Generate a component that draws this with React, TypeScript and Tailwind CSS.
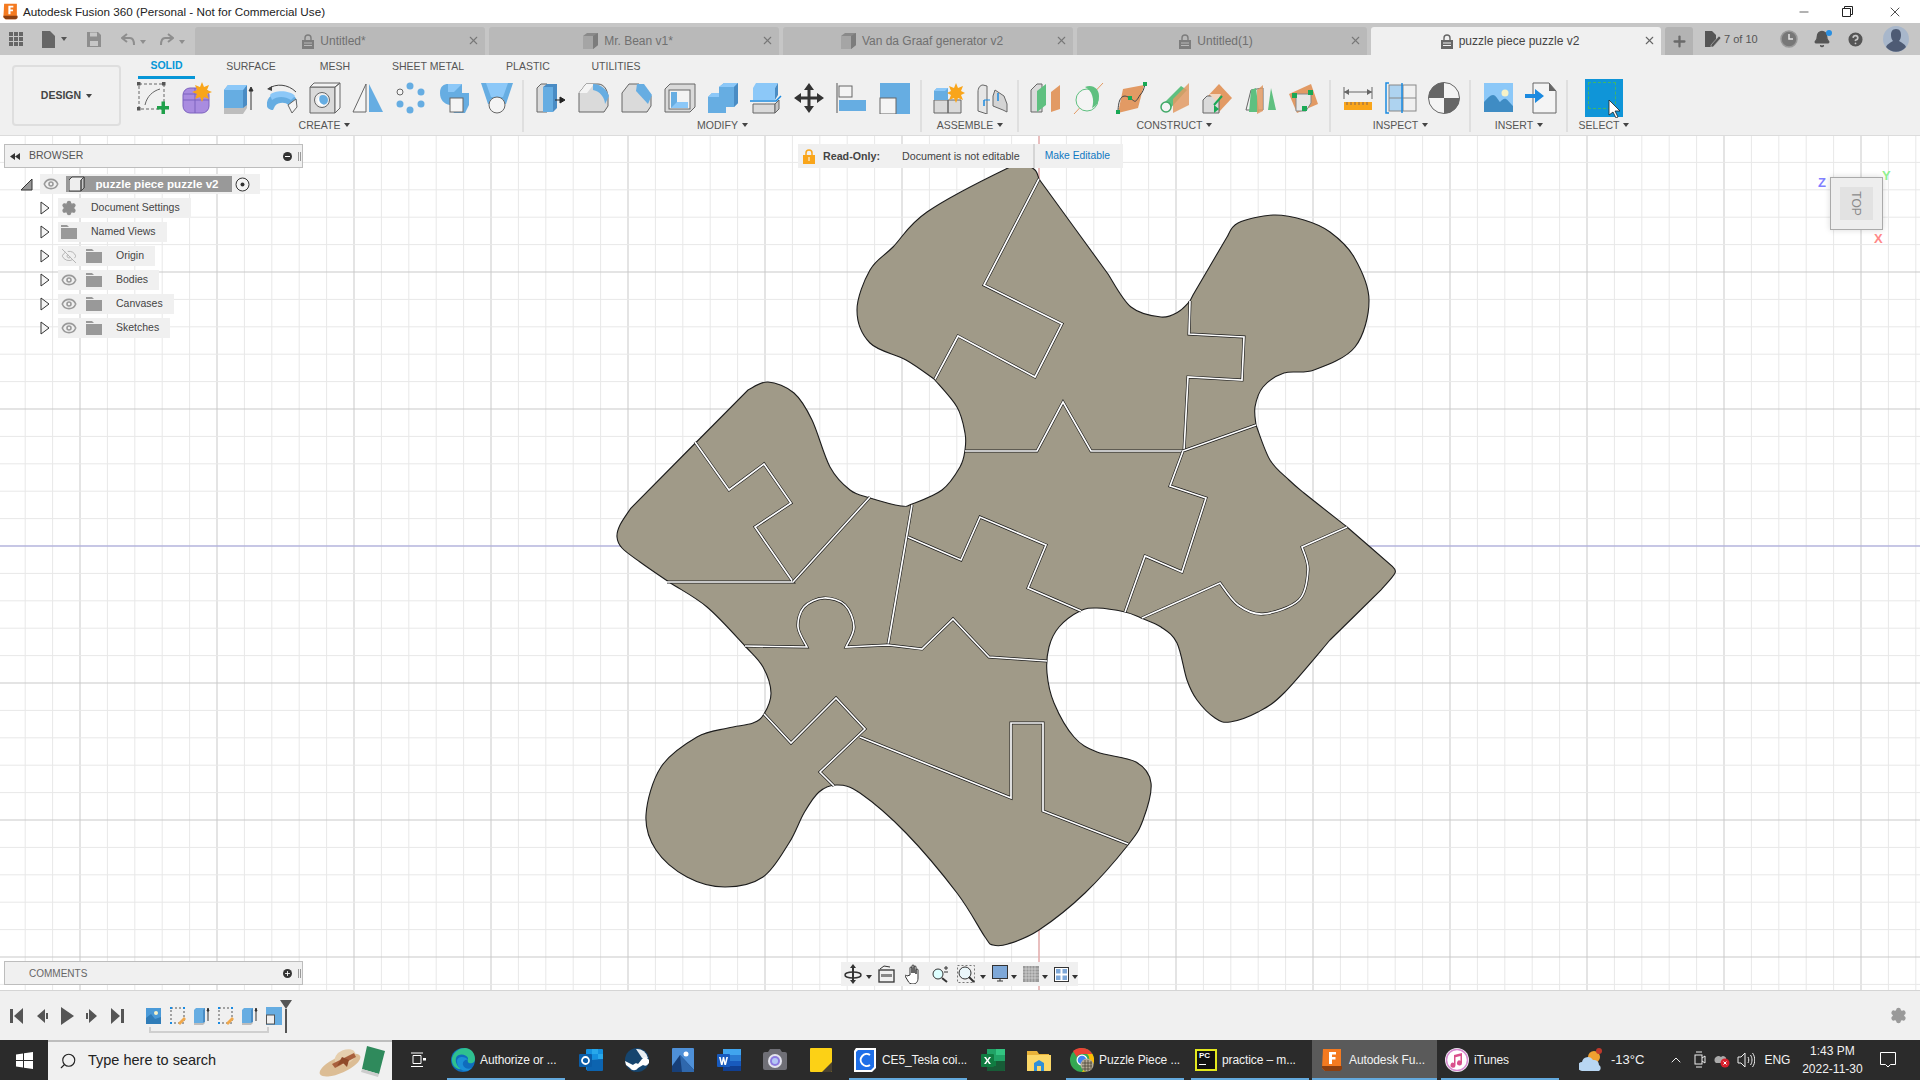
import type { ReactNode } from "react";
import { X, Minus, Plus, ChevronUp, Search, Eye, EyeOff, Settings, HelpCircle, Bell } from "lucide-react";

type Pt = [number, number];

// Catmull-Rom through a run of points; a two point run stays a straight line
function runToPath(run: Pt[]) {
    let d = "";
    for (let i = 0; i < run.length - 1; i++) {
        const p0 = run[Math.max(i - 1, 0)];
        const p1 = run[i];
        const p2 = run[i + 1];
        const p3 = run[Math.min(i + 2, run.length - 1)];
        const c1 = [p1[0] + (p2[0] - p0[0]) / 6, p1[1] + (p2[1] - p0[1]) / 6];
        const c2 = [p2[0] - (p3[0] - p1[0]) / 6, p2[1] - (p3[1] - p1[1]) / 6];
        d += ` C${c1[0]} ${c1[1]} ${c2[0]} ${c2[1]} ${p2[0]} ${p2[1]}`;
    }
    return d;
}

function runsToPath(runs: Pt[][], close = false) {
    let d = `M${runs[0][0][0]} ${runs[0][0][1]}`;
    runs.forEach((r) => {
        d += ` L${r[0][0]} ${r[0][1]}` + runToPath(r);
    });
    return close ? d + " Z" : d;
}

const outline: Pt[][] = [
    [[934, 379], [906, 360], [870, 343], [857, 310], [870, 270], [893, 247], [927, 212], [1008, 168], [1024, 165], [1035, 170], [1039, 179]],
    [[1039, 179], [1108, 274]],
    [[1108, 274], [1131, 307], [1161, 317], [1178, 312], [1190, 301]],
    [[1193, 295], [1227, 237]],
    [[1227, 237], [1238, 223], [1273, 215], [1304, 220], [1330, 232], [1354, 257], [1369, 300], [1355, 347], [1314, 370], [1284, 373], [1263, 387], [1255, 407], [1256, 425]],
    [[1256, 425], [1270, 460], [1289, 480], [1304, 493], [1347, 527]],
    [[1347, 527], [1392, 566]],
    [[1392, 566], [1395, 573], [1381, 590]],
    [[1381, 590], [1330, 640]],
    [[1330, 640], [1284, 693], [1258, 712], [1230, 722], [1215, 718], [1197, 700], [1187, 680], [1177, 643], [1161, 627], [1141, 618], [1125, 612], [1097, 608], [1080, 611], [1059, 627], [1049, 647], [1047, 673], [1054, 703], [1074, 737], [1097, 752], [1136, 762], [1151, 783], [1143, 820], [1128, 845], [1085, 893], [1039, 930], [1008, 944], [993, 945], [985, 937], [957, 893], [906, 833], [860, 793], [837, 785], [819, 792], [804, 813], [789, 843], [763, 877], [725, 887], [687, 877], [656, 850], [646, 815], [661, 767], [697, 737], [728, 728], [753, 723], [764, 714], [771, 693], [763, 667], [745, 646], [707, 607], [669, 582], [640, 562], [622, 548], [617, 537], [620, 525], [631, 508]],
    [[631, 508], [748, 390]],
    [[748, 390], [768, 382], [794, 393], [812, 420], [830, 467], [850, 490], [870, 498], [901, 506], [912, 504], [942, 490], [960, 467], [965, 450], [965, 433], [957, 407], [934, 379]],
];

const seams: Pt[][][] = [
    [[[1039, 179], [984, 285]], [[984, 285], [1062, 324]], [[1062, 324], [1035, 377]], [[1035, 377], [958, 336]], [[958, 336], [935, 379]]],
    [[[1190, 301], [1189, 334]], [[1189, 334], [1244, 337]], [[1244, 337], [1242, 380]], [[1242, 380], [1188, 377]], [[1188, 377], [1184, 451]]],
    [[[965, 451], [1037, 451]], [[1037, 451], [1063, 402]], [[1063, 402], [1091, 451]], [[1091, 451], [1183, 451]], [[1183, 451], [1256, 425]]],
    [[[1183, 451], [1170, 486]], [[1170, 486], [1206, 498]], [[1206, 498], [1182, 572]], [[1182, 572], [1145, 556]], [[1145, 556], [1125, 612]]],
    [[[1347, 527], [1302, 547]], [[1302, 547], [1308, 570], [1299, 600], [1263, 614], [1238, 605], [1220, 583]], [[1220, 583], [1142, 618]]],
    [[[695, 442], [729, 490]], [[729, 490], [764, 464]], [[764, 464], [791, 503]], [[791, 503], [755, 527]], [[755, 527], [793, 582]], [[793, 582], [667, 582]]],
    [[[870, 497], [793, 582]]],
    [[[912, 505], [888, 645]]],
    [[[908, 537], [961, 560]], [[961, 560], [980, 517]], [[980, 517], [1046, 545]], [[1046, 545], [1028, 588]], [[1028, 588], [1081, 611]]],
    [[[745, 646], [807, 647]], [[807, 647], [798, 627], [804, 607], [824, 598], [845, 605], [854, 627], [846, 647]], [[846, 647], [888, 645]], [[888, 645], [922, 649]], [[922, 649], [953, 619]], [[953, 619], [989, 657]], [[989, 657], [1047, 661]]],
    [[[764, 714], [791, 743]], [[791, 743], [836, 698]], [[836, 698], [865, 729]], [[865, 729], [820, 772]], [[820, 772], [834, 786]]],
    [[[860, 737], [1011, 798]], [[1011, 798], [1011, 723]], [[1011, 723], [1043, 723]], [[1043, 723], [1043, 811]], [[1043, 811], [1128, 844]]],
];

const STEP = 137;
const MINOR = STEP / 5;

function CanvasDrawing() {
    const vLines: { x: number; major: boolean }[] = [];
    for (let i = -38; i < 35; i++) vLines.push({ x: 1039 + i * MINOR, major: i % 5 === 0 });
    const hLines: { y: number; major: boolean }[] = [];
    for (let i = -15; i < 17; i++) hLines.push({ y: 546 + i * MINOR, major: i % 5 === 0 });
    return (
        <svg className="absolute inset-0 w-full h-full" viewBox="0 136 1920 854">
            {vLines.map((l) => (
                <line key={`v${l.x}`} x1={l.x} x2={l.x} y1={136} y2={990} stroke={l.major ? "#c9c9c9" : "#e8e8e8"} strokeWidth={1} />
            ))}
            {hLines.map((l) => (
                <line key={`h${l.y}`} y1={l.y} y2={l.y} x1={0} x2={1920} stroke={l.major ? "#c9c9c9" : "#e8e8e8"} strokeWidth={1} />
            ))}
            <line x1={0} x2={1920} y1={546} y2={546} stroke="#a9a9e6" />
            <line x1={1039} x2={1039} y1={136} y2={990} stroke="#ee9a9a" />
            <path d={runsToPath(outline, true)} fill="#a09a88" stroke="#1c1c1c" strokeWidth={1.1} />
            {seams.map((s, i) => (
                <g key={i} fill="none">
                    <path d={runsToPath(s)} stroke="#1c1c1c" strokeWidth={3} />
                    <path d={runsToPath(s)} stroke="#fff" strokeWidth={1.7} />
                </g>
            ))}
        </svg>
    );
}

const Ic = ({ children, w = 32, h = 32 }: { children: ReactNode; w?: number; h?: number }) => (
    <svg width={w} height={h} viewBox="0 0 32 32">{children}</svg>
);

const Caret = ({ c = "#444" }: { c?: string }) => (
    <span className="inline-block w-0 h-0 border-l-[3px] border-r-[3px] border-t-[4px] border-l-transparent border-r-transparent" style={{ borderTopColor: c }} />
);

const BL = "#66ade2";
const BD = "#4a8cc4";
const BH = "#8cc8f8";
const G = "#dadada";
const O = "#666";

const toolIcons: Record<string, ReactNode> = {
    sketch: (
        <Ic>
            <rect x="2" y="2" width="25" height="25" fill="none" stroke="#666" strokeWidth="1" strokeDasharray="3 2" />
            {[[0, 0], [25, 0], [0, 25]].map(([x, y]) => <rect key={`${x}${y}`} x={x} y={y} width="3.5" height="3.5" fill="#555" />)}
            <path d="M8 23 C10 14 16 9 23 7" fill="none" stroke="#666" />
            <path d="M20 24h4.500v-4.500h3.500v4.500h4v3.500h-4v4.500h-3.500v-4.500h-4.500z" fill="#1fa04a" />
        </Ic>
    ),
    form: (
        <Ic>
            <rect x="3" y="6" width="26" height="25" rx="7" fill="#a98ce0" stroke="#7d62bf" />
            <path d="M3 18h26M15 6v25M3 12h20" stroke="#7d62bf" fill="none" />
            <path d="M22 0l2 5 5-2-2 5 5 2-5 2 2 5-5-2-2 5-2-5-5 2 2-5-5-2 5-2-2-5 5 2z" fill="#f9a51a" />
        </Ic>
    ),
    extrude: (
        <Ic>
            <path d="M1 8l4-5h19v21l-4 5H1z" fill={BL} />
            <path d="M20 8l4-5v21l-4 5z" fill={BD} />
            <path d="M1 8l4-5h19l-4 5z" fill={BH} />
            <path d="M1 26h19l4-3v3l-4 6H1z" fill="#bdbdbd" />
            <path d="M28 28V6M26 9l2-4 2 4z" stroke="#333" fill="#333" />
        </Ic>
    ),
    revolve: (
        <Ic>
            <path d="M1 24C0 14 8 11 16 11s15 3 15 9l-4 9-5-6c-2-3-10-3-13 1l-2 4c-3 0-6-2-6-4z" fill={BL} />
            <path d="M4 13C8 8 24 8 29 14l-4 4C19 14 11 14 6 18z" fill={BH} />
            <path d="M22 23l8-6 1 8-5 6z" fill="#f4f4f4" stroke="#666" />
            <path d="M2 7C10 1 22 2 30 10" fill="none" stroke="#444" />
            <path d="M1 7l5-3v5z" fill="#444" />
        </Ic>
    ),
    hole: (
        <Ic>
            <path d="M1 5h25v26H1z" fill={G} stroke={O} />
            <path d="M1 5l4-4h26l-5 4zM26 5l5-4v25l-5 5z" fill="#f3f3f3" stroke={O} />
            <circle cx="13" cy="18" r="7.500" fill="#efefef" stroke={O} />
            <circle cx="14" cy="18" r="5" fill={BL} />
            <path d="M11 14a6 6 0 0 0 5 9a5 5 0 0 1-5-9z" fill="#fff" />
        </Ic>
    ),
    mirror: (
        <Ic>
            <path d="M14 2v28H1z" fill="#f4f4f4" stroke={O} />
            <path d="M17 2v28h14z" fill={BL} />
        </Ic>
    ),
    pattern: (
        <Ic>
            <circle cx="5" cy="10" r="3" fill="#f4f4f4" stroke={O} />
            <circle cx="15" cy="4" r="3.500" fill={BL} />
            <circle cx="26" cy="10" r="3.500" fill={BL} />
            <circle cx="5" cy="22" r="3.500" fill={BL} />
            <circle cx="26" cy="22" r="3.500" fill={BL} />
            <circle cx="15" cy="28" r="3.500" fill={BL} />
        </Ic>
    ),
    combine: (
        <Ic>
            <path d="M2 11C2 4 6 2 10 2h14v9h7v12l-4 8H16l-4-8C6 22 2 18 2 11z" fill={BL} />
            <path d="M10 2h14l-8 8h-6z" fill={BH} />
            <rect x="12" y="16" width="13" height="14" fill="#f4f4f4" stroke={O} />
        </Ic>
    ),
    loft: (
        <Ic>
            <path d="M0 1h32l-7 21H7z" fill={BL} />
            <path d="M5 1h22l-5 14H10z" fill={BH} />
            <circle cx="16" cy="23" r="8" fill="#f4f4f4" stroke={O} />
        </Ic>
    ),
    press: (
        <Ic>
            <path d="M2 30V6l4-4h6v28z" fill={G} stroke={O} />
            <path d="M8 5l4-3h10l-4 3zM18 5l4-3v24l-4 4z" fill={BD} />
            <rect x="8" y="5" width="10" height="25" fill={BL} />
            <path d="M20 18h7M25 15l5 3-5 3z" stroke="#222" fill="#222" />
        </Ic>
    ),
    fillet: (
        <Ic>
            <path d="M1 30V11L8 2h12c6 0 10 6 10 14v8l-4 6z" fill={G} stroke={O} />
            <path d="M1 11L8 2h8l-7 9z" fill="#f4f4f4" />
            <path d="M15 2c8 0 14 6 16 12l-4 8c0-6-5-13-12-14z" fill={BL} />
        </Ic>
    ),
    chamfer: (
        <Ic>
            <path d="M1 30V11L8 2h10l12 12v10l-4 6z" fill={G} stroke={O} />
            <path d="M16 2h7l8 11-4 9-12-13z" fill={BL} />
        </Ic>
    ),
    shell: (
        <Ic>
            <path d="M1 30V7l5-5h25v23l-5 5z" fill={G} stroke={O} />
            <rect x="5" y="8" width="21" height="19" fill="#f3f3f3" stroke={O} />
            <path d="M7 10h6v10h11v6H7z" fill={BL} />
            <path d="M13 20h11v6H7z" fill={BH} />
        </Ic>
    ),
    combine2: (
        <Ic>
            <path d="M1 15l4-4h7V5l5-4h14v20l-4 4h-8v6H1z" fill={BL} />
            <path d="M12 5l5-4h14l-4 4zM1 15l4-4h7v4z" fill={BH} />
            <path d="M27 5l4-4v20l-4 4z" fill={BD} />
        </Ic>
    ),
    offset: (
        <Ic>
            <path d="M3 6l3-5h22l-3 5zM3 6h22v12H3z" fill={BH} />
            <path d="M25 6l3-5v12l-3 5z" fill={BD} />
            <path d="M0 19h26l5-5" stroke="#1b8ae0" fill="none" strokeWidth="1.500" />
            <path d="M3 22h22v9H3z" fill={G} stroke={O} />
            <path d="M25 22l4-4v9l-4 4z" fill="#c6c6c6" stroke={O} />
        </Ic>
    ),
    move: (
        <Ic>
            <path d="M16 1l5 7h-3.500v6.500H24V11l7 5-7 5v-3.500h-6.500V24H21l-5 7-5-7h3.500v-6.500H8V21l-7-5 7-5v3.500h6.500V8H11z" fill="#333" />
        </Ic>
    ),
    align: (
        <Ic>
            <path d="M1 1v30" stroke="#555" />
            <rect x="3" y="4" width="13" height="11" fill="#f4f4f4" stroke={O} />
            <rect x="3" y="18" width="27" height="11" fill={BL} />
        </Ic>
    ),
    scale: (
        <Ic>
            <path d="M1 1h30v31H1z" fill={BL} />
            <rect x="1" y="16" width="16" height="16" fill="#f4f4f4" stroke={O} />
        </Ic>
    ),
    newcomp: (
        <Ic>
            <path d="M1 18h14v13H1zM15 18h13v13H15z" fill={G} stroke={O} />
            <path d="M1 9l3-3h11v12H1z" fill={BL} />
            <path d="M1 9l3-3h11l-3 3z" fill={BH} />
            <path d="M23 1l2 5 5-2-2 5 4 2-4 2 2 5-5-2-2 5-2-5-5 2 2-5-4-2 4-2-2-5 5 2z" fill="#f9a51a" />
        </Ic>
    ),
    joint: (
        <Ic>
            <path d="M2 29V10c0-4 2-7 5-7l4 1v28z" fill="#e6e6e6" stroke={O} />
            <path d="M17 14l2-6 9 6 3 8v8l-4-2-10-4z" fill="#d4d4d4" stroke={O} />
            <path d="M8 18v6M22 11v8" stroke="#1b8ae0" strokeWidth="1.500" />
            <path d="M8 18h6" stroke="#1b8ae0" />
        </Ic>
    ),
    plane1: (
        <Ic>
            <path d="M1 30V8l6-6h5v28z" fill={G} stroke={O} />
            <path d="M7 30V9l9-7v21z" fill="#5fc080" />
            <path d="M21 10l9-7v24l-9 3z" fill="#e29a64" />
        </Ic>
    ),
    plane2: (
        <Ic>
            <path d="M1 32L30 1" stroke="#e29a64" />
            <ellipse cx="14" cy="18" rx="11" ry="11" fill="#f4f4f4" stroke="#5fc080" />
            <path d="M12 5c8-3 14 2 14 9s-3 10-7 12c3-8 0-18-7-21z" fill="#5fc080" />
        </Ic>
    ),
    plane3: (
        <Ic>
            <path d="M2 31l5-24L28 3l-6 23z" fill="#e29a64" />
            <path d="M2 31c0-10 2-20 10-16s6 8 12-2c3-3 4-6 5-11" fill="none" stroke="#444" />
            <rect x="0" y="28" width="4" height="4" fill="#19a855" />
            <rect x="27" y="0" width="4" height="4" fill="#19a855" />
            <rect x="12" y="14" width="4" height="4" fill="#19a855" />
        </Ic>
    ),
    plane4: (
        <Ic>
            <path d="M2 24L22 4l6 4L8 30z" fill="#5fc080" />
            <circle cx="7" cy="25" r="5" fill="#f4f4f4" stroke="#3fa866" strokeWidth="1.500" />
            <path d="M14 17L30 1v22L14 31z" fill="#e29a64" opacity=".85" />
        </Ic>
    ),
    plane5: (
        <Ic>
            <path d="M4 16L17 2l13 14-13 14z" fill="#e29a64" />
            <path d="M1 18l4-4h12v17H1z" fill={G} stroke={O} />
            <path d="M7 12h12l-4 8z" fill="#f2d6c0" />
            <path d="M12 23l8-9" stroke="#19a855" strokeWidth="2" />
            <path d="M12 23v8l5-4z" fill="#19a855" />
        </Ic>
    ),
    plane6: (
        <Ic>
            <path d="M1 28L6 8l12-2v22z" fill="#f1f1f1" stroke="#666" />
            <path d="M6 8l5-2 3 24H4z" fill="#5fc080" />
            <path d="M26 6l5 22h-8z" fill="#5fc080" />
            <path d="M12 8l6-5v26l-6 3z" fill="#e29a64" opacity=".85" />
        </Ic>
    ),
    plane7: (
        <Ic>
            <path d="M1 12L23 2l7 20-21 9z" fill="#e29a64" />
            <path d="M8 12h15v9l-5 8H8z" fill="#e6e6e6" stroke="#888" />
            <rect x="4" y="11" width="5" height="5" fill="#19a855" />
            <rect x="20" y="8" width="5" height="5" fill="#19a855" />
            <rect x="14" y="24" width="5" height="5" fill="#19a855" />
        </Ic>
    ),
    measure: (
        <Ic>
            <path d="M2 5v12M30 5v12M2 10h28" stroke="#666" fill="none" />
            <path d="M2 10l5-3v6zM30 10l-5-3v6z" fill="#666" />
            <rect x="2" y="20" width="28" height="8" fill="#f9a51a" />
            <path d="M5 20v3M9 20v3M13 20v3M17 20v3M21 20v3M25 20v3" stroke="#865" />
        </Ic>
    ),
    section: (
        <Ic>
            <rect x="4" y="3" width="14" height="26" fill="#aed3f0" />
            <rect x="4" y="3" width="27" height="26" fill="none" stroke="#888" />
            <path d="M4 16h27M18 3v26" stroke="#888" fill="none" />
            <path d="M4 1H1v30h3M17 1v30" stroke="#1b8ae0" fill="none" strokeWidth="1.500" />
        </Ic>
    ),
    center: (
        <Ic>
            <circle cx="16" cy="16" r="15.500" fill="#f4f4f4" stroke="#666" />
            <path d="M16 .5A15.500 15.500 0 0 0 .5 16H16zM16 16h15.500A15.500 15.500 0 0 1 16 31.500z" fill="#666" />
        </Ic>
    ),
    image: (
        <Ic>
            <rect x="2" y="1" width="29" height="29" fill="#8cc8f8" />
            <circle cx="23" cy="11" r="3.500" fill="#f7f2c8" />
            <path d="M2 30V20c4-4 6-7 9-7s5 5 7 7c2-2 4-4 6-3s5 5 7 7v6z" fill="#3f8cc4" />
        </Ic>
    ),
    insert: (
        <Ic>
            <path d="M8 1h16l7 8v22H8z" fill="#f4f4f4" stroke="#666" />
            <path d="M24 1l7 8h-7z" fill="#666" />
            <path d="M0 12h10V7l9 7-9 7v-5H0z" fill="#1b8ae0" />
        </Ic>
    ),
};

const Tool = ({ name }: { name: string }) => (
    <div className="w-[43px] h-[32px] flex items-center justify-center">{toolIcons[name]}</div>
);

function Group({ label, tools, children }: { label: string; tools?: string[]; children?: ReactNode }) {
    return (
        <div className="flex flex-col items-center">
            <div className="flex h-[36px] items-center">
                {tools?.map((t) => <Tool key={t} name={t} />)}
                {children}
            </div>
            <div className="mt-[1px] h-4 flex items-center gap-1 text-[10.5px] leading-none text-[#555]">
                {label} <Caret />
            </div>
        </div>
    );
}

const Sep = () => <div className="w-[2px] h-[52px] ml-[4px] mr-[5px] bg-[#dfdfdf]" />;

function DocTab({ title, kind, active }: { title: string; kind: "lock" | "cube"; active?: boolean }) {
    return (
        <div className={`w-[290px] h-[28px] rounded-t-[3px] relative flex items-center justify-center gap-[6px] pr-[12px] text-[12px] ${active ? "bg-[#f0f0f0] text-[#444]" : "bg-[#b9b9b9] text-[#707070]"}`}>
            {kind === "lock" ? (
                <svg width="12" height="15" viewBox="0 0 12 15"><path d="M3 6V4a3 3 0 0 1 6 0v2" fill="none" stroke={active ? "#666" : "#7d7d7d"} strokeWidth="1.400" /><path d="M0 6h12v9H0z" fill={active ? "#666" : "#7d7d7d"} /><path d="M2 9h8M2 11.500h8" stroke={active ? "#f0f0f0" : "#b9b9b9"} /></svg>
            ) : (
                <svg width="15" height="16" viewBox="0 0 15 16"><path d="M0 3l4-3h11v12l-5 4H0z" fill="#8a8a8a" /><path d="M0 3h10v13H0z" fill="#a5a5a5" /><path d="M10 3l5-3v12l-5 4z" fill="#7c7c7c" /></svg>
            )}
            <span>{title}</span>
            <X className="absolute right-[5px] top-[7px]" size={13} color={active ? "#666" : "#777"} strokeWidth={2} />
        </div>
    );
}

function TreeRow({ label, eye, folder = true, gear }: { label: string; eye?: "on" | "off"; folder?: boolean; gear?: boolean }) {
    return (
        <div className="h-[24px] flex items-center">
            <svg width="10" height="14" viewBox="0 0 10 14" className="ml-[40px] mr-[8px]"><path d="M1 1l8 6-8 6z" fill="#f4f4f4" stroke="#333" /></svg>
            <div className="h-[20px] flex items-center bg-[#f0f0f0] pr-[11px] text-[10.5px] text-[#444]">
                {eye === "on" && <Eye className="ml-[3px] mr-[9px]" size={16} color="#9a9a9a" strokeWidth={2.4} />}
                {eye === "off" && <EyeOff className="ml-[3px] mr-[9px]" size={16} color="#b5b5b5" strokeWidth={1.5} />}
                {gear && <Settings className="ml-[3px] mr-[14px]" size={16} color="#8d8d8d" fill="#8d8d8d" />}
                {folder && !gear && (
                    <svg width="16" height="14" viewBox="0 0 16 14" className={`mr-[14px] ${eye ? "" : "ml-[3px]"}`}><path d="M0 0h6l2 2h8v12H0z" fill="#999" /><path d="M0 2.500h16" stroke="#f0f0f0" /></svg>
                )}
                <span>{label}</span>
            </div>
        </div>
    );
}

function PlayBtn({ d }: { d: string }) {
    return (
        <div className="w-[25px] flex justify-center">
            <svg width="16" height="18" viewBox="0 0 16 18"><path d={d} fill="#555" /></svg>
        </div>
    );
}

const TlIcon = ({ children }: { children: ReactNode }) => (
    <svg width="16" height="18" viewBox="0 0 16 18">{children}</svg>
);

function TlSketch() {
    return (
        <TlIcon>
            <rect x="1" y="1" width="13" height="15" fill="none" stroke="#555" strokeDasharray="2 2" />
            <path d="M0 0h2v2H0zM13 0h2v2h-2zM0 15h2v2H0z" fill="#1b8ae0" />
            <path d="M8 16l6-6 2 2-6 6z" fill="#f0a84c" />
        </TlIcon>
    );
}

function TlExtrude() {
    return (
        <TlIcon>
            <path d="M0 3l2-2h9v14l-2 1H0z" fill={BL} />
            <path d="M9 3l2-2v14l-2 1z" fill={BD} />
            <path d="M0 16h9l2-1v1l-2 2H0z" fill="#bdbdbd" />
            <path d="M14 14V3M13 4l1-3 1 3z" stroke="#333" />
        </TlIcon>
    );
}

const AppIcon = ({ children }: { children: ReactNode }) => (
    <svg width="24" height="24" viewBox="0 0 24 24">{children}</svg>
);

const FusionIcon = ({ size = 24 }: { size?: number }) => (
    <svg width={size} height={size} viewBox="0 0 24 24">
        <path d="M3 1h18v19l-2 3H5l-3-3z" fill="#f47a20" />
        <path d="M2 18h20v3l-2 2H5l-3-3z" fill="#8c3f10" />
        <path d="M9 4h7v2.500h-4v2.500h3.500v2.500H12V16H9z" fill="#fff" />
    </svg>
);

const appIcons: Record<string, ReactNode> = {
    edge: (
        <AppIcon>
            <circle cx="12" cy="12" r="12" fill="#0f6cbd" />
            <path d="M1 10C3 3 9 0 14 0c6 0 10 5 10 11 0 4-4 5-6 4s-1-4-1-5C15 6 7 5 5 10c-1 4 1 9 6 11C5 22 0 17 1 10z" fill="#2fc08f" />
            <path d="M6 13c0-5 9-5 11-1-3-1-6 2-5 5s5 5 9 3c-6 6-15 2-15-7z" fill="#1b8fd6" />
        </AppIcon>
    ),
    outlook: (
        <AppIcon>
            <rect x="7" y="1" width="17" height="21" rx="1" fill="#1490df" />
            <path d="M13 1h6v5h-6zM19 6h5v5h-5zM13 11h6v5h-6z" fill="#28a8ea" />
            <path d="M7 12l17-1v11a1 1 0 0 1-1 1H8z" fill="#0c64b0" />
            <rect x="0" y="6" width="13" height="13" rx="1" fill="#0a5da8" />
            <circle cx="6.500" cy="12.500" r="3.500" fill="none" stroke="#fff" strokeWidth="1.800" />
        </AppIcon>
    ),
    steam: (
        <AppIcon>
            <circle cx="12" cy="12" r="12" fill="#16456e" />
            <path d="M0 13l8 4c2-2 4-2 5-1l4-5a4 4 0 1 1 1 6l-5 3c-2 3-6 3-8 0L1 17z" fill="#fff" />
            <path d="M11 1a11 11 0 0 1 12 9h-6z" fill="#fff" opacity=".9" />
        </AppIcon>
    ),
    photos: (
        <AppIcon>
            <rect x="1" y="0" width="22" height="24" rx="1" fill="#4e90d8" />
            <circle cx="15" cy="6" r="2.500" fill="#fff" />
            <path d="M1 18L9 7l14 15v2H1z" fill="#173f78" />
            <path d="M9 7l14 15v2H11z" fill="#2f68ad" />
        </AppIcon>
    ),
    word: (
        <AppIcon>
            <rect x="6" y="1" width="18" height="22" rx="1" fill="#2b7cd3" />
            <path d="M6 1h18v6H6z" fill="#41a5ee" />
            <path d="M6 13h18v5H6z" fill="#185abd" />
            <path d="M6 18h18v5H6z" fill="#103f91" />
            <rect x="0" y="6" width="13" height="13" rx="1" fill="#185abd" />
            <path d="M2 9h1.700l1.100 5 1-5h1.400l1 5 1.100-5H11l-2 8H7.400l-.9-4.300-.9 4.300H4z" fill="#fff" />
        </AppIcon>
    ),
    camera: (
        <AppIcon>
            <rect x="0" y="4" width="24" height="18" rx="2" fill="#6f6f76" />
            <path d="M5 4l2-3h10l2 3z" fill="#6f6f76" />
            <circle cx="12" cy="13" r="7" fill="#e4e4ee" />
            <circle cx="12" cy="13" r="5" fill="#8d7be0" />
            <circle cx="12" cy="13" r="3" fill="#b4c7f4" />
        </AppIcon>
    ),
    sticky: (
        <AppIcon>
            <rect x="1" y="0" width="22" height="24" rx="1" fill="#fcd116" />
            <path d="M13 24l10-10v9a1 1 0 0 1-1 1z" fill="#4a4230" />
        </AppIcon>
    ),
    ce5: (
        <AppIcon>
            <path d="M3 0h20v20l-4 4H1V3z" fill="#fff" />
            <path d="M5 2h16v17l-3 3H3V4z" fill="#1e6fe8" />
            <path d="M17 7a6 6 0 1 0 0 10" fill="none" stroke="#fff" strokeWidth="2" />
        </AppIcon>
    ),
    excel: (
        <AppIcon>
            <rect x="6" y="1" width="18" height="22" rx="1" fill="#21a366" />
            <path d="M6 1h9v6H6z" fill="#21a366" />
            <path d="M15 1h9v6h-9z" fill="#33c481" />
            <path d="M6 13h9v5H6z" fill="#107c41" />
            <path d="M15 13h9v5h-9z" fill="#185c37" />
            <path d="M6 18h18v4a1 1 0 0 1-1 1H6z" fill="#185c37" />
            <rect x="0" y="6" width="13" height="13" rx="1" fill="#107c41" />
            <path d="M3 9h2l1.500 2.500L8 9h2l-2.500 3.500L10 16H8l-1.500-2.500L5 16H3l2.500-3.500z" fill="#fff" />
        </AppIcon>
    ),
    explorer: (
        <AppIcon>
            <path d="M0 3h10l2 3h10v16H0z" fill="#e8b23a" />
            <path d="M0 7h24v15a1 1 0 0 1-1 1H0z" fill="#fbd768" />
            <path d="M7 15l5-3 5 3v8h-3v-5h-4v5H7z" fill="#2f8fd8" />
        </AppIcon>
    ),
    chrome: (
        <AppIcon>
            <circle cx="12" cy="12" r="12" fill="#34a853" />
            <path d="M12 0a12 12 0 0 1 10.400 6H12a6 6 0 0 0-5.200 3L3 3a12 12 0 0 1 9-3z" fill="#ea4335" />
            <path d="M22.400 6A12 12 0 0 1 12 24l5.200-9a6 6 0 0 0 0-9z" fill="#fbbc05" />
            <circle cx="12" cy="12" r="5.500" fill="#fff" />
            <circle cx="12" cy="12" r="4.300" fill="#4285f4" />
            <circle cx="17" cy="17" r="6.500" fill="#b5ab97" />
            <path d="M12 15h10M12 18h10M12 21h8M15 12v11M18 12v11M21 13v9" stroke="#4a4436" strokeWidth=".8" />
        </AppIcon>
    ),
    pycharm: (
        <div className="w-[22px] h-[22px] bg-[#e3e81e] p-[2px]">
            <div className="w-full h-full bg-[#111] flex flex-col pl-[2px] text-[8px] font-bold leading-[10px] text-white">
                PC
                <div className="w-[7px] h-[1px] mt-[3px] bg-white" />
            </div>
        </div>
    ),
    itunes: (
        <AppIcon>
            <circle cx="12" cy="12" r="12" fill="#f4f4f8" />
            <circle cx="12" cy="12" r="10.500" fill="#fff" stroke="#d88bd0" strokeWidth="1.500" />
            <path d="M9 7l8-2v10a2.500 2.500 0 1 1-1.500-2.300V8l-5 1.200v8a2.500 2.500 0 1 1-1.500-2.300z" fill="#d9508c" />
        </AppIcon>
    ),
};

function TaskBtn({ icon, label, active }: { icon: ReactNode; label?: string; active?: boolean }) {
    if (!label) {
        return <div className="w-[46px] h-10 flex items-center justify-center">{icon}</div>;
    }
    return (
        <div className={`w-[125px] h-10 relative flex items-center gap-[5px] pl-[8px] text-[12px] whitespace-nowrap text-[#f2f2f2] ${active ? "bg-[#5a5a5a]" : ""}`}>
            {icon}
            <span className="tracking-[-0.1px]">{label}</span>
            <div className={`absolute bottom-0 h-[2px] bg-[#63a9dd] ${active ? "left-0 right-0" : "left-[4px] right-[3px]"}`} />
        </div>
    );
}

export default function App() {
    return (
        <div className="w-[1920px] h-[1080px] flex flex-col overflow-hidden bg-white font-['Liberation_Sans',sans-serif]">
            {/* title bar */}
            <div className="h-[23px] flex items-center bg-white text-[11.7px] text-[#222]">
                <div className="w-[23px] pl-[2px]"><FusionIcon size={17} /></div>
                <span>Autodesk Fusion 360 (Personal - Not for Commercial Use)</span>
                <div className="ml-auto flex items-center">
                    <Minus size={14} color="#222" strokeWidth={1.2} className="mr-[31px]" />
                    <svg width="11" height="11" viewBox="0 0 11 11" className="mr-[34px]"><path d="M.5 2.500h8v8h-8zM2.500 2.500v-2h8v8h-2" fill="none" stroke="#222" /></svg>
                    <X size={16} color="#222" strokeWidth={1.2} className="mr-[17px]" />
                </div>
            </div>

            {/* document tabs */}
            <div className="h-[32px] flex items-end bg-[#c6c6c6]">
                <div className="w-[195px] h-[32px] relative flex items-center pl-[9px]">
                    <svg width="14" height="14" viewBox="0 0 14 14" className="mr-[19px]"><path d="M0 0h4v4H0zM5 0h4v4H5zM10 0h4v4h-4zM0 5h4v4H0zM5 5h4v4H5zM10 5h4v4h-4zM0 10h4v4H0zM5 10h4v4H5zM10 10h4v4h-4z" fill="#666" /></svg>
                    <svg width="13" height="17" viewBox="0 0 13 17" className="mr-[6px]"><path d="M0 0h8l5 5v12H0z" fill="#666" /></svg>
                    <Caret c="#555" />
                    <svg width="14" height="15" viewBox="0 0 14 15" className="ml-[20px]"><path d="M0 0h11l3 3v12H0z" fill="#8e8e8e" /><rect x="3" y="0.500" width="7" height="4" fill="#c6c6c6" /><rect x="3" y="9" width="8" height="5" fill="#c6c6c6" /></svg>
                    <svg width="14" height="13" viewBox="0 0 14 13" className="ml-[20px]"><path d="M6 1L1 5l5 4M1 5h8c3 0 4 3 4 7" fill="none" stroke="#8e8e8e" strokeWidth="2" /></svg>
                    <span className="ml-[5px]"><Caret c="#8e8e8e" /></span>
                    <svg width="14" height="13" viewBox="0 0 14 13" className="ml-[14px]"><path d="M8 1l5 4-5 4M13 5H5c-3 0-4 3-4 7" fill="none" stroke="#8e8e8e" strokeWidth="2" /></svg>
                    <span className="ml-[5px]"><Caret c="#8e8e8e" /></span>
                </div>
                <div className="flex gap-[4px] items-end">
                    <DocTab title="Untitled*" kind="lock" />
                    <DocTab title="Mr. Bean v1*" kind="cube" />
                    <DocTab title="Van da Graaf generator v2" kind="cube" />
                    <DocTab title="Untitled(1)" kind="lock" />
                    <DocTab title="puzzle piece puzzle v2" kind="lock" active />
                </div>
                <div className="ml-[4px] w-[28px] h-[28px] rounded-t-[3px] bg-[#b3b3b3] flex items-center justify-center">
                    <Plus size={17} color="#6a6a6a" strokeWidth={3.200} />
                </div>
                <div className="h-[32px] flex items-center text-[11px] font-bold text-[#555]">
                    <svg width="16" height="16" viewBox="0 0 16 16" className="ml-[12px] mr-[3px]"><path d="M0 0h7l4 4v5l-5 7H0z" fill="#555" /><path d="M6 14l8-9 2 2-8 9H6z" fill="#555" stroke="#c6c6c6" strokeWidth=".6" /></svg>
                    <span className="font-normal">7 of 10</span>
                    <svg width="18" height="18" viewBox="0 0 18 18" className="ml-[22px]"><circle cx="9" cy="9" r="8" fill="#777" stroke="#999" strokeWidth="1.500" /><path d="M9 4v5h4" stroke="#e5e5e5" fill="none" strokeWidth="1.500" /></svg>
                    <span className="relative ml-[15px]">
                        <Bell size={18} color="#555" fill="#555" />
                        <span className="absolute top-0 right-[-1px] w-[6px] h-[6px] rounded-full bg-[#2a8fe0]" />
                    </span>
                    <HelpCircle size={19} color="#c6c6c6" fill="#555" strokeWidth={2.2} className="ml-[15px]" />
                    <svg width="26" height="26" viewBox="0 0 26 26" className="ml-[18px]">
                        <circle cx="13" cy="13" r="13" fill="#a8b7cb" />
                        <path d="M13 3c4 0 5 3 5 6s-1 5-2 6c3 2 6 3 7 6a13 13 0 0 1-20 0c1-3 4-4 7-6-1-1-2-3-2-6s1-6 5-6z" fill="#4e5b74" />
                    </svg>
                </div>
            </div>

            {/* ribbon */}
            <div className="h-[81px] flex bg-[#f0f0f0] border-b border-[#dcdcdc] pl-[12px]">
                <div className="w-[109px] h-[61px] mt-[10px] border-2 border-[#dedede] rounded-[4px] flex items-center justify-center gap-[5px] text-[10.5px] font-bold text-[#444]">
                    DESIGN <Caret />
                </div>
                <div className="ml-[10px] flex flex-col">
                    <div className="h-[24px] pl-[7px] flex text-[10.5px] text-[#555]">
                        <div className="w-[57px] h-[24px] flex items-center justify-center text-[#0696d7] font-bold border-b-[3px] border-[#0696d7]">SOLID</div>
                        <div className="w-[112px] flex items-center justify-center">SURFACE</div>
                        <div className="w-[56px] flex items-center justify-center">MESH</div>
                        <div className="w-[130px] flex items-center justify-center">SHEET METAL</div>
                        <div className="w-[70px] flex items-center justify-center">PLASTIC</div>
                        <div className="w-[106px] flex items-center justify-center">UTILITIES</div>
                    </div>
                    <div className="flex mt-[1px] items-start">
                        <Group label="CREATE" tools={["sketch", "form", "extrude", "revolve", "hole", "mirror", "pattern", "combine", "loft"]} />
                        <Sep />
                        <Group label="MODIFY" tools={["press", "fillet", "chamfer", "shell", "combine2", "offset", "move", "align", "scale"]} />
                        <Sep />
                        <Group label="ASSEMBLE" tools={["newcomp", "joint"]} />
                        <Sep />
                        <Group label="CONSTRUCT" tools={["plane1", "plane2", "plane3", "plane4", "plane5", "plane6", "plane7"]} />
                        <Sep />
                        <Group label="INSPECT" tools={["measure", "section", "center"]} />
                        <Sep />
                        <Group label="INSERT" tools={["image", "insert"]} />
                        <Sep />
                        <div className="w-[62px]">
                            <Group label="SELECT">
                                <div className="w-[38px] h-[38px] relative bg-[#0f95d8]">
                                    <div className="absolute left-[3px] top-[3px] w-[28px] h-[27px] border border-dashed border-[#3fb56a]" />
                                    <svg width="12" height="18" viewBox="0 0 12 18" className="absolute left-[23px] top-[21px]"><path d="M1 0v15l4-3 3 6 2-1-3-6h5z" fill="#fff" stroke="#222" strokeWidth=".8" /></svg>
                                </div>
                            </Group>
                        </div>
                    </div>
                </div>
            </div>

            {/* viewport */}
            <div className="flex-1 relative overflow-hidden bg-white">
                <CanvasDrawing />

                <div className="absolute left-[4px] top-[8px] w-[299px] h-[24px] flex items-center bg-[#f0f0f0] border border-[#bdbdbd] text-[10.5px] text-[#555]">
                    <svg width="10" height="7" viewBox="0 0 10 7" className="ml-[5px] mr-[9px]"><path d="M5 0v7L0 3.500zM10 0v7L5 3.500z" fill="#333" /></svg>
                    BROWSER
                    <span className="ml-auto w-[9px] h-[9px] rounded-full bg-[#333] flex items-center justify-center">
                        <span className="w-[5px] h-[1px] bg-white" />
                    </span>
                    <span className="ml-[6px] mr-[1px] w-[3px] h-[9px] border-x border-[#999]" />
                </div>

                <div className="absolute left-0 top-[36px] flex flex-col">
                    <div className="h-[24px] flex items-center">
                        <svg width="13" height="13" viewBox="0 0 13 13" className="ml-[20px] mr-[7px]"><path d="M12 1v11H1z" fill="#999" stroke="#333" /></svg>
                        <div className="h-[20px] flex items-center bg-[#f0f0f0] pr-[10px]">
                            <Eye className="ml-[3px] mr-[7px]" size={16} color="#9a9a9a" strokeWidth={2.4} />
                            <div className="w-[166px] h-[16px] relative bg-[#999] flex items-center justify-center pl-[16px] text-[11.6px] font-bold text-white">
                                <svg width="16" height="16" viewBox="0 0 16 16" className="absolute left-[3px] top-0"><path d="M0 4l3-3h12v11l-3 3H0z" fill="#eee" stroke="#444" /><path d="M12 4v11M12 4l3-3v11l-3 3z" fill="#c6c6c6" stroke="#444" /></svg>
                                puzzle piece puzzle v2
                            </div>
                            <svg width="15" height="15" viewBox="0 0 15 15" className="ml-[3px]"><circle cx="7.500" cy="7.500" r="6.500" fill="#f4f4f4" stroke="#333" /><circle cx="7.500" cy="7.500" r="2" fill="#333" /></svg>
                        </div>
                    </div>
                    <TreeRow label="Document Settings" gear />
                    <TreeRow label="Named Views" />
                    <TreeRow label="Origin" eye="off" />
                    <TreeRow label="Bodies" eye="on" />
                    <TreeRow label="Canvases" eye="on" />
                    <TreeRow label="Sketches" eye="on" />
                </div>

                {/* read only notice */}
                <div className="absolute left-[798px] top-[8px] w-[325px] h-[24px] flex items-center bg-[#f0f0f0] text-[10.7px] text-[#444]">
                    <svg width="12" height="15" viewBox="0 0 12 15" className="ml-[5px]"><path d="M3 6V4a3 3 0 0 1 6 0v2" fill="none" stroke="#f9a51a" strokeWidth="1.500" /><path d="M0 6h12v9H0z" fill="#f9a51a" /><path d="M6 8v4" stroke="#fff" /></svg>
                    <span className="ml-[8px] font-bold">Read-Only:</span>
                    <span className="ml-[22px]">Document is not editable</span>
                    <span className="ml-[13px] w-[2px] h-[24px] bg-[#d5d5d5]" />
                    <span className="ml-[10px] text-[10.3px] text-[#0f78c2]">Make Editable</span>
                </div>

                {/* view cube */}
                <div className="absolute left-[1830px] top-[41px] w-[53px] h-[53px] flex items-center justify-center bg-[#eeeeee] border border-[#aaa] shadow-[0_0_6px_rgba(0,0,0,0.15)]">
                    <div className="w-[33px] h-[33px] flex items-center justify-center bg-[#e2e2e2] text-[12px] text-[#8b8b8b] rotate-90">TOP</div>
                </div>
                <span className="absolute left-[1818px] top-[37px] text-[13px] font-bold text-[#8080ff]">Z</span>
                <span className="absolute left-[1882px] top-[30px] text-[13px] font-bold text-[#90f090]">Y</span>
                <span className="absolute left-[1874px] top-[93px] text-[13px] font-bold text-[#ff8888]">X</span>

                {/* comments */}
                <div className="absolute left-[4px] top-[825px] w-[299px] h-[24px] flex items-center bg-[#f0f0f0] border border-[#bdbdbd] text-[10px] text-[#666] pl-[24px]">
                    COMMENTS
                    <span className="ml-auto w-[9px] h-[9px] rounded-full bg-[#333] flex items-center justify-center">
                        <Plus size={7} color="#fff" strokeWidth={3} />
                    </span>
                    <span className="ml-[6px] mr-[1px] w-[3px] h-[9px] border-x border-[#999]" />
                </div>

                {/* navigation bar */}
                <div className="absolute left-[841px] top-[826px] w-[237px] h-[24px] flex items-center bg-[#f0f0f0]">
                    <svg width="18" height="20" viewBox="0 0 18 20" className="ml-[3px]"><path d="M9 0l3 4h-2v12h2l-3 4-3-4h2V4H6z" fill="#333" /><ellipse cx="9" cy="11" rx="8" ry="3" fill="none" stroke="#333" strokeWidth="1.500" /></svg>
                    <span className="ml-[4px] mr-[4px]"><Caret c="#333" /></span>
                    <svg width="17" height="18" viewBox="0 0 17 18" className="ml-[2px]"><rect x="1" y="5" width="15" height="12" fill="none" stroke="#333" strokeWidth="1.300" /><path d="M3 9h11v3H3z" fill="#888" /><path d="M2 4l4-3 6 1" stroke="#333" fill="none" /></svg>
                    <svg width="18" height="20" viewBox="0 0 18 20" className="ml-[10px]"><path d="M5 11V4a1 1 0 0 1 2 0v5-7a1 1 0 0 1 2 0v7-6a1 1 0 0 1 2 0v7-4a1 1 0 0 1 2 0v8c0 4-2 6-5 6s-4-1-5-3l-3-5c0-1 1-1 2 0z" fill="#fff" stroke="#333" /></svg>
                    <svg width="18" height="18" viewBox="0 0 18 18" className="ml-[8px]"><circle cx="7" cy="9" r="5" fill="#dff" stroke="#333" /><path d="M11 13l5 4" stroke="#333" strokeWidth="2" /><path d="M13 3h4M15 1v4M13 7h4" stroke="#333" /></svg>
                    <svg width="18" height="18" viewBox="0 0 18 18" className="ml-[8px]"><rect x="0.500" y="0.500" width="17" height="17" fill="none" stroke="#777" strokeDasharray="2 2" /><circle cx="8" cy="8" r="6" fill="#eaf6fa" stroke="#333" /><path d="M12 12l5 5" stroke="#333" strokeWidth="2" /></svg>
                    <span className="ml-[5px]"><Caret c="#333" /></span>
                    <svg width="16" height="18" viewBox="0 0 16 18" className="ml-[6px]"><rect x="0.500" y="0.500" width="15" height="13" fill="#7ea8d8" stroke="#333" /><path d="M5 16h6M8 14v2" stroke="#333" /></svg>
                    <span className="ml-[3px]"><Caret c="#333" /></span>
                    <svg width="16" height="16" viewBox="0 0 16 16" className="ml-[6px]"><rect width="16" height="16" fill="#999" /><path d="M3 0v16M6 0v16M9 0v16M12 0v16M0 3h16M0 6h16M0 9h16M0 12h16" stroke="#f0f0f0" strokeWidth=".5" /></svg>
                    <span className="ml-[3px]"><Caret c="#333" /></span>
                    <svg width="15" height="15" viewBox="0 0 15 15" className="ml-[6px]"><rect x="0.500" y="0.500" width="14" height="14" fill="#fff" stroke="#333" /><rect x="2" y="2" width="4.500" height="4.500" fill="#7ea8d8" /><rect x="8.500" y="2" width="4.500" height="4.500" fill="#7ea8d8" /><rect x="2" y="8.500" width="4.500" height="4.500" fill="#7ea8d8" /><rect x="8.500" y="8.500" width="4.500" height="4.500" fill="#7ea8d8" /></svg>
                    <span className="ml-[3px]"><Caret c="#333" /></span>
                </div>
            </div>

            {/* timeline */}
            <div className="h-[50px] flex items-center bg-[#f0f0f0] border-t border-[#d5d5d5] pl-[4px] relative">
                <PlayBtn d="M1 2h3v14H1zM14 1v16L5 9z" />
                <PlayBtn d="M11 2v14L3 9zM12 6h2v6h-2z" />
                <PlayBtn d="M2 0l13 9-13 9z" />
                <PlayBtn d="M5 2v14l8-7zM2 6h2v6H2z" />
                <PlayBtn d="M2 1v16l9-8zM12 2h3v14h-3z" />
                <div className="ml-[17px] relative">
                    <div className="flex gap-[8px]">
                        <TlIcon><rect y="1" width="15" height="16" fill="#4a9ad8" /><circle cx="10" cy="6" r="2" fill="#f7f2c8" /><path d="M0 17v-6l5-4 4 5 6-2v7z" fill="#2f7cb8" /></TlIcon>
                        <TlSketch />
                        <TlExtrude />
                        <TlSketch />
                        <TlExtrude />
                        <TlIcon><path d="M0 0h16v18H0z" fill={BL} /><rect x="0.500" y="8" width="8" height="9" fill="#f0f0f0" stroke="#555" /></TlIcon>
                    </div>
                    <div className="absolute left-[3px] top-[20px] h-[6px] w-[120px] border-x-2 border-b-2 border-[#cfcfcf]" />
                </div>
                <div className="absolute left-[280px] top-[9px] flex flex-col items-center">
                    <div className="w-0 h-0 border-l-[6px] border-r-[6px] border-t-[9px] border-l-transparent border-r-transparent border-t-[#555]" />
                    <div className="w-[2px] h-[24px] bg-[#555]" />
                </div>
                <Settings className="ml-auto mr-[13px]" size={17} color="#9a9a9a" fill="#9a9a9a" />
            </div>

            {/* windows taskbar */}
            <div className="h-10 flex items-center bg-[#2b2b2b] text-white">
                <div className="w-12 flex justify-center">
                    <svg width="17" height="17" viewBox="0 0 17 17"><path d="M0 2.500l7-1v6.500H0zM8 1.300L17 0v8H8zM0 9h7v6.500l-7-1zM8 9h9v8l-9-1.300z" fill="#fff" /></svg>
                </div>
                <div className="w-[344px] h-10 flex items-center bg-[#f0f0f0] border-t-2 border-[#bdbdbd] text-[14.500px] text-[#222] pl-[11px] whitespace-nowrap">
                    <Search size={18} color="#222" className="-scale-x-100 mr-[11px] shrink-0" strokeWidth={1.5} />
                    <span className="w-[230px]">Type here to search</span>
                    <svg width="68" height="34" viewBox="0 0 68 34" className="shrink-0">
                        <ellipse cx="22" cy="21" rx="22" ry="8" transform="rotate(-24 22 21)" fill="#dcbd95" />
                        <ellipse cx="27" cy="13" rx="11" ry="7" transform="rotate(-24 27 13)" fill="#e6cfae" />
                        <path d="M14 20l22-11 2 4-21 11z" fill="#a85f3c" />
                        <path d="M24 13l7 3-2 7-4-4-6 3z" fill="#8f4a2a" />
                        <path d="M49 2l18 5-6 23-17-5z" fill="#2f8a5c" />
                        <path d="M44 25l17 5-1 3-17-5z" fill="#ccc" />
                    </svg>
                </div>
                <div className="w-[51px] flex justify-center">
                    <svg width="16" height="16" viewBox="0 0 16 16"><path d="M3 3.500h8v8H3zM1 1h12M1 14.500h12" fill="none" stroke="#fff" /><rect x="13" y="6" width="3" height="2.500" fill="#fff" /></svg>
                </div>
                <TaskBtn icon={appIcons.edge} label="Authorize or ..." />
                <TaskBtn icon={appIcons.outlook} />
                <TaskBtn icon={appIcons.steam} />
                <TaskBtn icon={appIcons.photos} />
                <TaskBtn icon={appIcons.word} />
                <TaskBtn icon={appIcons.camera} />
                <TaskBtn icon={appIcons.sticky} />
                <div className="w-[1px]" />
                <TaskBtn icon={appIcons.ce5} label="CE5_Tesla coi..." />
                <TaskBtn icon={appIcons.excel} />
                <TaskBtn icon={appIcons.explorer} />
                <TaskBtn icon={appIcons.chrome} label="Puzzle Piece ..." />
                <TaskBtn icon={appIcons.pycharm} label="practice – m..." />
                <TaskBtn icon={<FusionIcon />} label="Autodesk Fu..." active />
                <TaskBtn icon={appIcons.itunes} label="iTunes" />
                <div className="flex items-center text-[12px] text-[#f2f2f2]">
                    <svg width="24" height="24" viewBox="0 0 24 24" className="ml-[17px]"><circle cx="15" cy="9" r="6" fill="#f0a030" /><circle cx="20" cy="3" r="3" fill="#c0392b" /><path d="M3 23a4.500 4.500 0 0 1 0-9 6 6 0 0 1 11-2 5 5 0 0 1 6 5 3.500 3.500 0 0 1 0 6z" fill="#b8d6f2" /></svg>
                    <span className="ml-[8px] text-[13px]">-13°C</span>
                    <ChevronUp size={16} color="#eee" className="ml-[24px]" strokeWidth={1.5} />
                    <svg width="12" height="18" viewBox="0 0 12 18" className="ml-[10px]"><rect x="1" y="4" width="7" height="9" fill="none" stroke="#eee" /><path d="M8 7l3-2v7l-3-2M2 1h6M2 16h6" fill="none" stroke="#eee" /></svg>
                    <svg width="16" height="16" viewBox="0 0 16 16" className="ml-[8px]"><path d="M1 10a4 4 0 0 1 6-5 3 3 0 0 1 5 3v3H2z" fill="#aaa" /><circle cx="11" cy="11" r="4.500" fill="#d8202c" /><path d="M9.500 9.500l3 3M12.500 9.500l-3 3" stroke="#fff" /></svg>
                    <svg width="18" height="16" viewBox="0 0 18 16" className="ml-[7px]"><path d="M1 5h3l4-4v14l-4-4H1z" fill="none" stroke="#eee" /><path d="M11 5c1 2 1 4 0 6M13.500 3c2 3 2 7 0 10M15.500 1c3 4 3 10 0 14" fill="none" stroke="#eee" /></svg>
                    <span className="ml-[9px]">ENG</span>
                    <div className="ml-[11px] w-[62px] flex flex-col items-center text-[12px] leading-[18px]">
                        <span>1:43 PM</span>
                        <span>2022-11-30</span>
                    </div>
                    <svg width="16" height="16" viewBox="0 0 16 16" className="ml-[17px]"><path d="M.5.500h15v12h-5L8 15l-2.500-2.500h-5z" fill="none" stroke="#fff" /></svg>
                </div>
            </div>
        </div>
    );
}
